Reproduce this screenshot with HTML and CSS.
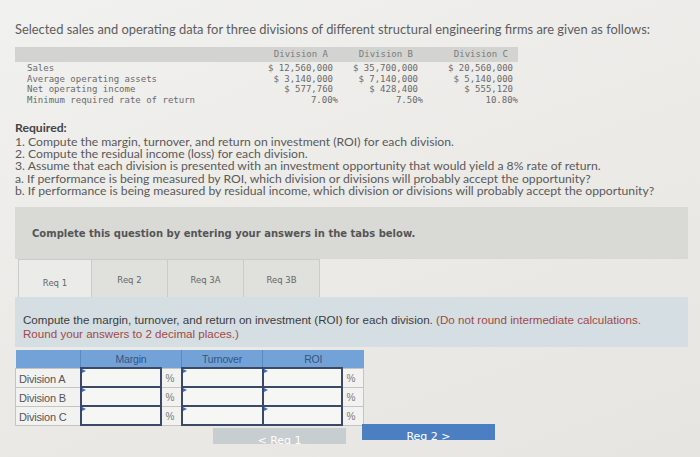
FILE: index.html
```html
<!DOCTYPE html>
<html>
<head>
<meta charset="utf-8">
<link rel="stylesheet" href="styles.css">
</head>
<body>
<div class="page">
  <p class="intro">Selected sales and operating data for three divisions of different structural engineering firms are given as follows:</p>

  <div class="data">
    <div class="band">
      <span class="lab"></span>
      <span class="val">Division A</span>
      <span class="val">Division B</span>
      <span class="val">Division C</span>
    </div>
    <div class="drow">
      <span class="lab">Sales</span>
      <span class="val">$ 12,560,000</span>
      <span class="val">$ 35,700,000</span>
      <span class="val">$ 20,560,000</span>
    </div>
    <div class="drow">
      <span class="lab">Average operating assets</span>
      <span class="val">$ 3,140,000</span>
      <span class="val">$ 7,140,000</span>
      <span class="val">$ 5,140,000</span>
    </div>
    <div class="drow">
      <span class="lab">Net operating income</span>
      <span class="val">$ 577,760</span>
      <span class="val">$ 428,400</span>
      <span class="val">$ 555,120</span>
    </div>
    <div class="drow">
      <span class="lab">Minimum required rate of return</span>
      <span class="val pct">7.00%</span>
      <span class="val pct">7.50%</span>
      <span class="val pct">10.80%</span>
    </div>
  </div>

  <div class="required">
    <div class="req-head">Required:</div>
    <div class="req-line">1. Compute the margin, turnover, and return on investment (ROI) for each division.</div>
    <div class="req-line">2. Compute the residual income (loss) for each division.</div>
    <div class="req-line">3. Assume that each division is presented with an investment opportunity that would yield a 8% rate of return.</div>
    <div class="req-line">a. If performance is being measured by ROI, which division or divisions will probably accept the opportunity?</div>
    <div class="req-line">b. If performance is being measured by residual income, which division or divisions will probably accept the opportunity?</div>
  </div>

  <div class="complete">Complete this question by entering your answers in the tabs below.</div>

  <div class="tabs">
    <div class="tab active">Req 1</div>
    <div class="tab">Req 2</div>
    <div class="tab">Req 3A</div>
    <div class="tab">Req 3B</div>
  </div>

  <div class="panel">
    <div class="pline"><span class="dark">Compute the margin, turnover, and return on investment (ROI) for each division.</span> <span class="red">(Do not round intermediate calculations.</span></div>
    <div class="pline"><span class="red">Round your answers to 2 decimal places.)</span></div>
  </div>

  <table class="ans">
    <colgroup>
      <col class="c-lab"><col class="c-in1"><col class="c-p"><col class="c-in2"><col class="c-in3"><col class="c-p2">
    </colgroup>
    <thead>
      <tr><th></th><th colspan="2">Margin</th><th>Turnover</th><th colspan="2">ROI</th></tr>
    </thead>
    <tbody>
      <tr><td class="dl">Division A</td><td class="inp"></td><td class="pc">%</td><td class="inp"></td><td class="inp"></td><td class="pc">%</td></tr>
      <tr><td class="dl">Division B</td><td class="inp"></td><td class="pc">%</td><td class="inp"></td><td class="inp"></td><td class="pc">%</td></tr>
      <tr><td class="dl">Division C</td><td class="inp"></td><td class="pc">%</td><td class="inp"></td><td class="inp"></td><td class="pc">%</td></tr>
    </tbody>
  </table>

  <div class="nav">
    <div class="btn prev">&lt; Req 1</div>
    <div class="btn next">Req 2 &gt;</div>
  </div>
</div>
</body>
</html>
```

FILE: styles.css
```css
* { box-sizing: border-box; }
html, body {
  margin: 0;
  padding: 0;
  width: 700px;
  height: 457px;
  overflow: hidden;
}
body {
  background: linear-gradient(160deg, #f1f1ef 0%, #ecebe8 45%, #e6e5e2 100%);
  color: #5a5a5a;
  font-family: Lato, "Open Sans", sans-serif;
}
.page {
  padding: 22px 12px 0 15px;
}
.intro {
  margin: 0;
  font-size: 12.9px;
  line-height: 15px;
  color: #5d5d5d;
}

/* data table */
.data {
  margin-top: 10px;
  width: 503px;
  font-family: "DejaVu Sans Mono", "Liberation Mono", monospace;
  font-size: 9px;
  color: #6a6a6a;
}
.band, .drow {
  display: grid;
  grid-template-columns: 235px 88px 85px 95px;
}
.band {
  background: #d3d3d1;
  height: 15px;
  line-height: 15px;
  color: #7a7a7a;
}
.band .val { padding-right: 10px; }
.drow {
  line-height: 10.7px;
}
.band:first-child + .drow { margin-top: 1px; }
.lab { padding-left: 12px; }
.val { text-align: right; padding-right: 5px; }
.val.pct { padding-right: 0; }

/* required */
.required {
  margin-top: 15px;
  font-size: 12.2px;
  color: #5a5a5a;
}
.req-head {
  font-weight: bold;
  line-height: 14px;
  margin-bottom: 1px;
  color: #444;
}
.req-line {
  line-height: 12.3px;
}

/* complete box */
.complete {
  margin-top: 10px;
  height: 52px;
  background: #d9d9d6;
  display: flex;
  align-items: center;
  padding-left: 17px;
  font-family: "DejaVu Sans", Verdana, sans-serif;
  font-weight: bold;
  font-size: 10px;
  color: #555;
}

/* tabs */
.tabs {
  display: flex;
  margin-left: 3px;
  height: 38px;
}
.tab {
  width: 76px;
  height: 38px;
  background: #e0e0dd;
  border: 1px solid #cbcbc8;
  border-bottom: none;
  display: flex;
  align-items: center;
  justify-content: center;
  font-family: "DejaVu Sans", Verdana, sans-serif;
  font-size: 8.5px;
  color: #666;
  padding-top: 3px;
}
.tab + .tab { border-left: none; }
.tab.active {
  background: #ebebe9;
  width: 74px;
  padding-top: 8px;
}

/* blue panel */
.panel {
  background: #d5dee2;
  height: 50px;
  padding: 16px 0 0 8px;
  font-family: "Liberation Sans", Arial, sans-serif;
  font-size: 11.6px;
  line-height: 14px;
  white-space: nowrap;
}
.panel .dark { color: #3c3c3c; }
.panel .red { color: #a04a48; }

/* answer table */
.ans {
  margin-top: 3px;
  border-collapse: collapse;
  width: 348px;
  table-layout: fixed;
  font-family: "Liberation Sans", Arial, sans-serif;
  letter-spacing: -0.2px;
}
.c-lab { width: 65px; }
.c-in1 { width: 80px; }
.c-p { width: 21px; }
.c-in2 { width: 81px; }
.c-in3 { width: 79px; }
.c-p2 { width: 22px; }
.ans th {
  background: #72a2d8;
  height: 18px;
  border-left: 1px solid #5b88c0;
  font-weight: normal;
  font-size: 10.5px;
  color: #35557f;
  padding: 0;
}
.ans th:first-child { border-left: none; }
.ans td {
  height: 19px;
  padding: 0;
  border: 1px solid #c4c4c2;
  background: #f2f2f0;
}
.ans td.dl {
  font-size: 11px;
  color: #555;
  padding-left: 3px;
  padding-top: 3px;
}
.ans td.inp {
  border: 2px solid #3b4868;
  background: #f6f6f4;
  position: relative;
}
.ans td.inp::before {
  content: "";
  position: absolute;
  left: 0;
  top: 0;
  border-left: 4px solid #3d6fbf;
  border-top: 2.5px solid transparent;
  border-bottom: 2.5px solid transparent;
}
.ans td.pc {
  font-size: 10px;
  color: #7a7a7a;
  padding-left: 4px;
  padding-top: 2px;
}

/* nav buttons */
.nav {
  display: flex;
  gap: 16px;
  padding-left: 198px;
}
.btn {
  width: 133px;
  height: 16px;
  overflow: hidden;
  text-align: center;
  color: #fff;
  font-family: "DejaVu Sans", sans-serif;
  font-size: 11px;
  line-height: 26px;
}
.btn.prev { background: #c8cdd2; margin-top: 2px; }
.btn.next { background: #4c7fc2; margin-top: -2px; }
```
